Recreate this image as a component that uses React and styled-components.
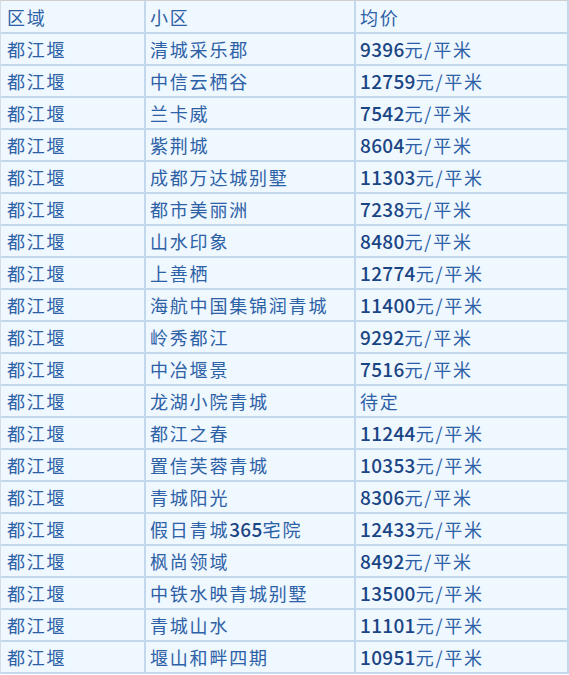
import React from "react";
import styled, { createGlobalStyle } from "styled-components";

const Global = createGlobalStyle`
  html, body { margin: 0; padding: 0; background: #ffffff; }
  body { font-family: "Liberation Sans", "Noto Sans CJK SC", sans-serif; }
`;

const Frame = styled.div`
  width: 569px;
  box-sizing: border-box;
  border-top: 1px solid #cfcfcf;
  border-left: 1px solid #d4dde6;
`;

const Table = styled.table`
  border-collapse: separate;
  border-spacing: 0;
  table-layout: fixed;
  width: 568px;
  background: #eff7ff;
`;

const Col = styled.col`
  width: ${(p) => p.$w}px;
`;

const Row = styled.tr`
  height: ${(p) => (p.$head ? 33 : 32)}px;
`;

const Cell = styled.td`
  padding: 0 4px 0 ${(p) => p.$pl}px;
  border-right: 2px solid #c3d8ed;
  border-bottom: 2px solid #c3d8ed;
  color: #2d61a6;
  font-family: "Noto Sans CJK SC", "Liberation Sans", sans-serif;
  font-size: 18px;
  letter-spacing: 1.8px;
  line-height: 24px;
  white-space: nowrap;
  vertical-align: middle;
  overflow: hidden;
`;

const Num = styled.span`
  font-family: "Noto Sans CJK SC", "Liberation Sans", sans-serif;
  font-weight: 500;
  color: #1a4584;
  font-size: 19px;
  letter-spacing: 0.3px;
`;

const rows = [
  ["清城采乐郡", "9396元/平米"],
  ["中信云栖谷", "12759元/平米"],
  ["兰卡威", "7542元/平米"],
  ["紫荆城", "8604元/平米"],
  ["成都万达城别墅", "11303元/平米"],
  ["都市美丽洲", "7238元/平米"],
  ["山水印象", "8480元/平米"],
  ["上善栖", "12774元/平米"],
  ["海航中国集锦润青城", "11400元/平米"],
  ["岭秀都江", "9292元/平米"],
  ["中冶堰景", "7516元/平米"],
  ["龙湖小院青城", "待定"],
  ["都江之春", "11244元/平米"],
  ["置信芙蓉青城", "10353元/平米"],
  ["青城阳光", "8306元/平米"],
  ["假日青城365宅院", "12433元/平米"],
  ["枫尚领域", "8492元/平米"],
  ["中铁水映青城别墅", "13500元/平米"],
  ["青城山水", "11101元/平米"],
  ["堰山和畔四期", "10951元/平米"],
];

function Text({ value }) {
  return value
    .split(/(\d+)/)
    .filter(Boolean)
    .map((part, i) => (/^\d+$/.test(part) ? <Num key={i}>{part}</Num> : <React.Fragment key={i}>{part}</React.Fragment>));
}

export default function App() {
  return (
    <>
      <Global />
      <Frame>
        <Table>
          <colgroup>
            <Col $w={145} />
            <Col $w={210} />
            <Col $w={213} />
          </colgroup>
          <tbody>
            <Row $head>
              <Cell $pl={6}>区域</Cell>
              <Cell $pl={4}>小区</Cell>
              <Cell $pl={4}>均价</Cell>
            </Row>
            {rows.map(([name, price], i) => (
              <Row key={i}>
                <Cell $pl={6}>都江堰</Cell>
                <Cell $pl={4}>
                  <Text value={name} />
                </Cell>
                <Cell $pl={4}>
                  <Text value={price} />
                </Cell>
              </Row>
            ))}
          </tbody>
        </Table>
      </Frame>
    </>
  );
}
